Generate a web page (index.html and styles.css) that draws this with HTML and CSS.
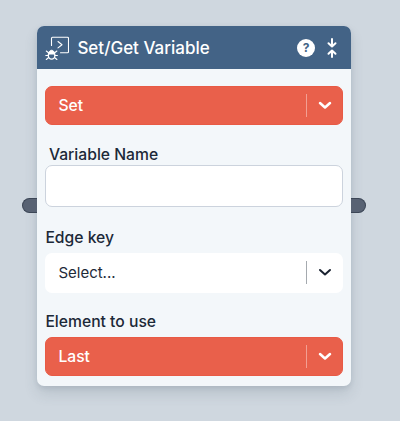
FILE: index.html
```html
<!DOCTYPE html>
<html lang="en">
<head>
<meta charset="utf-8">
<title>Set/Get Variable</title>
<link rel="stylesheet" href="styles.css">
</head>
<body>
<div class="node">
  <span class="handle handle-left"></span>
  <span class="handle handle-right"></span>
  <header class="node-header">
    <svg class="node-icon" viewBox="0 0 24 24" width="24" height="24" fill="none" stroke="#fff" stroke-width="1.1" stroke-linecap="round" stroke-linejoin="round">
      <path d="M6.500 9.500V2.300q0-1 1-1h15q1 0 1 1v13.500q0 1-1 1h-7"/>
      <path d="M13 5.500l4 3.200-4 3.200"/>
      <path d="M3.800 18.500a2.800 4.300 0 0 1 5.600 0" fill="#fff" stroke-width="0.800"/>
      <ellipse cx="6.600" cy="19.300" rx="3.300" ry="3.900" stroke-width="1.300"/>
      <path d="M3.500 16.800h6.200M1.300 15l2.200 1.700M11.900 15l-2.200 1.700M0.800 19.500h2.500M12.400 19.500H9.900M1.300 23.500l2.400-2M11.900 23.500l-2.400-2"/>
    </svg>
    <h1 class="node-title">Set/Get Variable</h1>
    <span class="help">?</span>
    <svg class="collapse" viewBox="0 0 12 20" width="12" height="20" fill="none" stroke="#fff" stroke-width="2" stroke-linecap="round" stroke-linejoin="round">
      <path d="M6 1v7M2.500 5.200L6 8.500l3.500-3.300M6 19v-6.500M2.500 15.800L6 12.500l3.500 3.300"/>
    </svg>
  </header>
  <div class="node-body">
    <div class="select select-red">
      <span class="select-value">Set</span>
      <span class="select-sep"></span>
      <svg class="chev" viewBox="0 0 14 9" width="14" height="9" fill="none" stroke="currentColor" stroke-width="2.500" stroke-linecap="round" stroke-linejoin="round"><path d="M2 2l5 4.500L12 2"/></svg>
    </div>
    <label class="label label-name">Variable Name</label>
    <div class="text-input"></div>
    <label class="label label-edge">Edge key</label>
    <div class="select select-white">
      <span class="select-value">Select...</span>
      <span class="select-sep"></span>
      <svg class="chev" viewBox="0 0 14 9" width="14" height="9" fill="none" stroke="currentColor" stroke-width="2" stroke-linecap="round" stroke-linejoin="round"><path d="M2 2l5 4.500L12 2"/></svg>
    </div>
    <label class="label label-element">Element to use</label>
    <div class="select select-red">
      <span class="select-value">Last</span>
      <span class="select-sep"></span>
      <svg class="chev" viewBox="0 0 14 9" width="14" height="9" fill="none" stroke="currentColor" stroke-width="2.500" stroke-linecap="round" stroke-linejoin="round"><path d="M2 2l5 4.500L12 2"/></svg>
    </div>
  </div>
</div>
</body>
</html>
```
FILE: styles.css
```css
* { box-sizing: border-box; }
html, body { margin: 0; height: 100%; }
body {
  background: #cfd7df;
  font-family: Inter, "Liberation Sans", sans-serif;
  overflow: hidden;
  padding: 26px 0 0 37.4px;
}
.node {
  position: relative;
  width: 313.6px;
  height: 359.7px;
  background: #f3f7fa;
  border-radius: 7px;
  box-shadow: 0 8px 14px rgba(60, 75, 95, 0.14), 0 2px 5px rgba(60, 75, 95, 0.12);
}
.handle {
  position: absolute;
  top: 172px;
  width: 15px;
  height: 15px;
  background: #586273;
  border: 1px solid #3c4656;
}
.handle-left { left: -15px; border-radius: 7.5px 0 0 7.5px; border-right: 0; }
.handle-right { right: -15px; border-radius: 0 7.5px 7.5px 0; border-left: 0; }
.node-header {
  display: flex;
  align-items: center;
  height: 43.3px;
  padding: 0 12.500px 0 8px;
  background: #436386;
  border-radius: 7px 7px 0 0;
  color: #fff;
}
.node-icon { flex: none; }
.node-title {
  flex: 1;
  margin: 0 0 0 8px;
  font-size: 17px;
  font-weight: 500;
  line-height: 24px;
  color: #fff;
}
.help {
  flex: none;
  width: 18px;
  height: 18px;
  margin-right: 11.500px;
  border-radius: 50%;
  background: #fff;
  color: #436386;
  font-size: 12px;
  font-weight: 700;
  line-height: 18px;
  text-align: center;
}
.collapse { flex: none; }
.node-body {
  display: flex;
  flex-direction: column;
  padding: 16.4px 8px 0;
}
.select {
  display: flex;
  align-items: center;
  flex: none;
  height: 39.6px;
  border-radius: 7px;
  font-size: 15px;
  line-height: 20px;
}
.select-red {
  background: #e9604b;
  border: 1px solid #e85a45;
  color: #fff;
  font-size: 15.7px;
  font-weight: 500;
}
.select-red .select-value { padding-top: 1px; padding-left: 12px; }
.select-white { height: 40px; background: #fff; color: #1e2a38; }
.select-value { flex: 1; padding-left: 13px; }
.select-sep { width: 1px; height: 23px; background: currentColor; opacity: 0.4; }
.chev { flex: none; margin: 0 11px; }
.select-red .chev { margin-right: 10px; }
.select-white .chev { color: #1a2230; }
.label {
  display: block;
  height: 20px;
  font-size: 15.7px;
  font-weight: 450;
  line-height: 20px;
  color: #1c2938;
}
.label-name { margin: 19.4px 0 0.6px; padding-left: 3.500px; }
.label-edge { margin: 21.2px 0 4.800px; }
.label-element { margin: 19px 0 5px; }
.text-input {
  flex: none;
  height: 41.400px;
  background: #fff;
  border: 1px solid #ccd3dd;
  border-radius: 7px;
}
```
